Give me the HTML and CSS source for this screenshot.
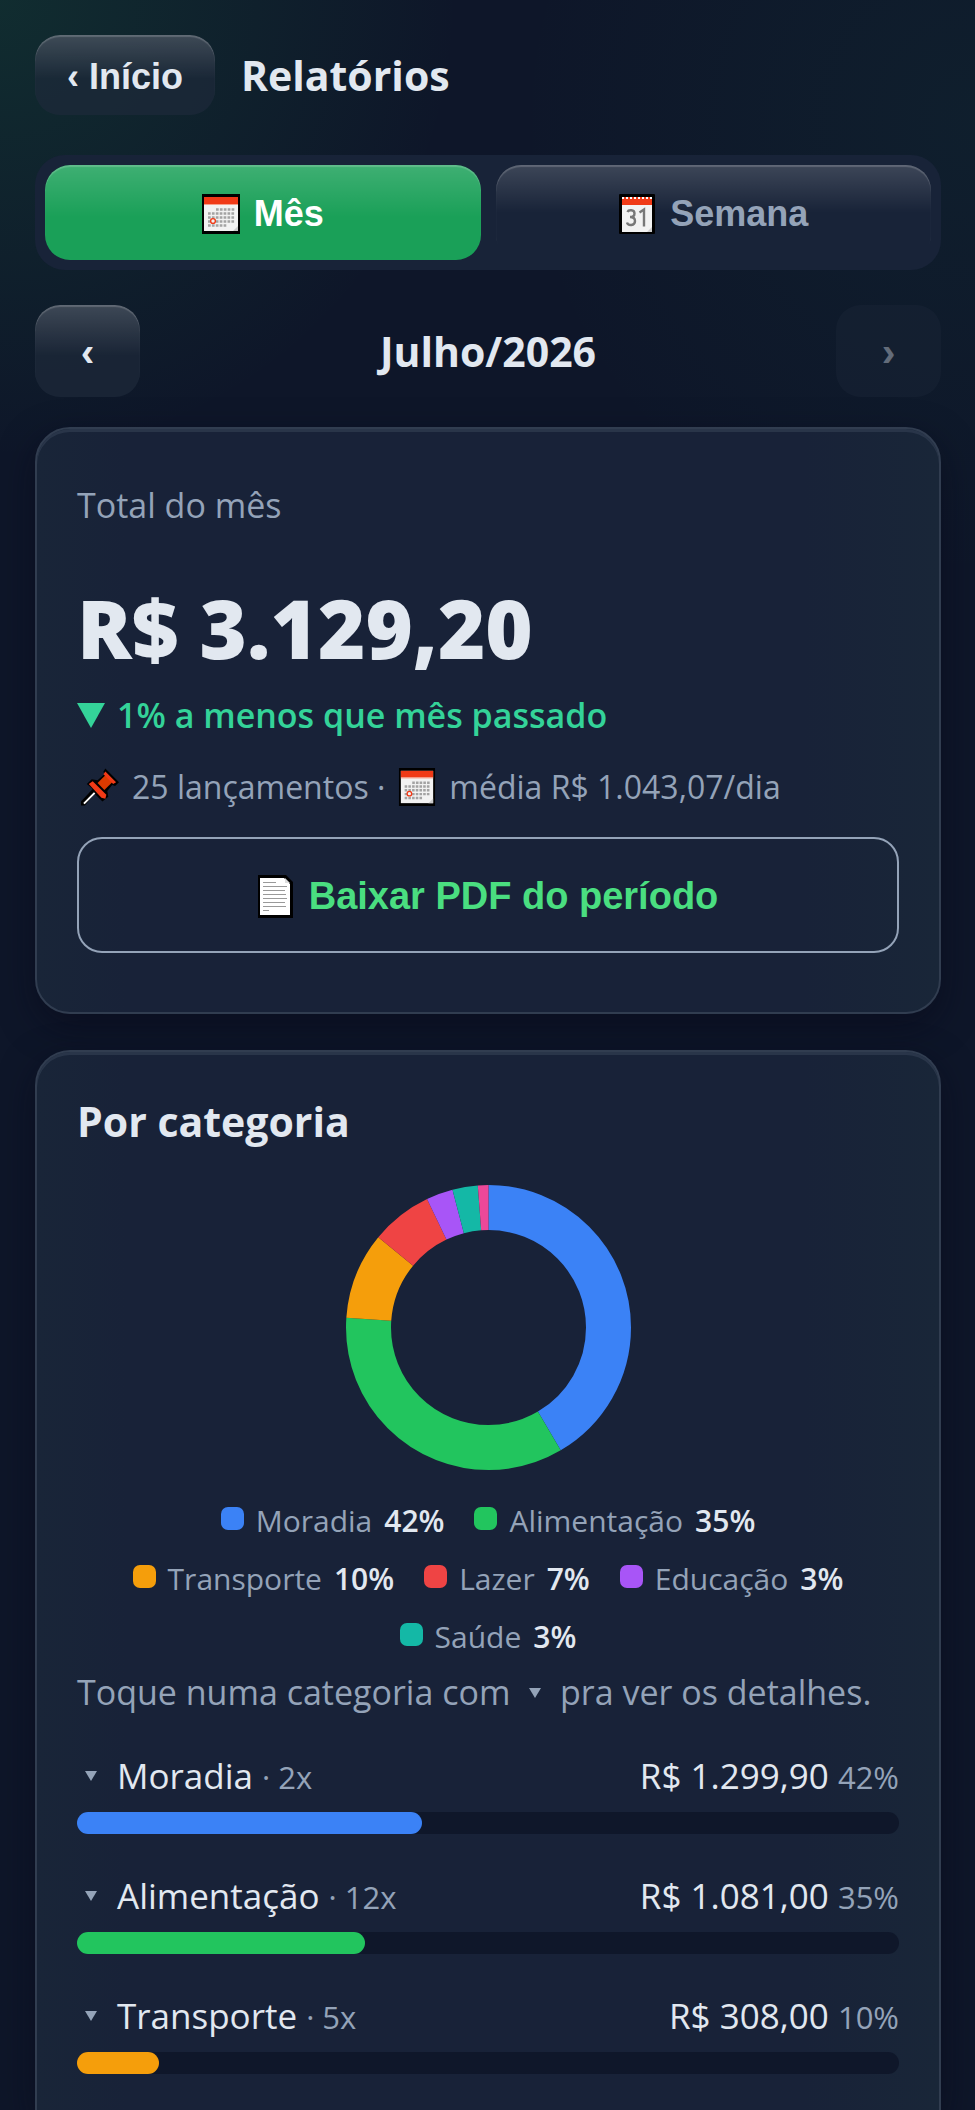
FILE: index.html
```html
<!DOCTYPE html>
<html lang="pt-BR">

<head>
    <meta charset="UTF-8">
    <meta name="viewport" content="width=device-width, initial-scale=1.0">
    <title>Relatórios</title>
    <link rel="stylesheet" href="styles.css">
</head>

<body>
    <!--icons used more than once-->
    <svg class="sprite" aria-hidden="true">
        <symbol id="icon-calendar" viewBox="0 0 38 40">
            <rect width="38" height="40" fill="#000" />
            <rect x="2" y="3" width="34" height="34" fill="#f2f2f2" />
            <rect x="2" y="3" width="34" height="7" fill="#f03a17" />
            <rect x="2" y="10" width="34" height="1" fill="#f7a08c" />
            <path d="M14 15.500h19M6 19.500h27M6 23.500h27M6 27.500h27M6 31.500h19" stroke="#a3a3a3" stroke-width="2.600" stroke-dasharray="2.700 1.200" />
            <circle cx="11" cy="27" r="2.400" fill="#f2f2f2" stroke="#f03a17" stroke-width="1.400" />
            <path d="M31 37l5-5v5z" fill="#ccc" />
        </symbol>
        <symbol id="icon-arrow" viewBox="0 0 12 10">
            <path d="M0 0h12l-6 10z" fill="currentColor" />
        </symbol>
    </svg>

    <header class="top">
        <button class="btn btn-back">‹ Início</button>
        <h1>Relatórios</h1>
    </header>

    <div class="tabs">
        <button class="btn tab active">
            <svg class="icon-tab"><use href="#icon-calendar" /></svg>Mês
        </button>
        <button class="btn tab">
            <svg class="icon-tab" viewBox="0 0 38 40">
                <rect x="1" width="36" height="40" rx="1" fill="#000" />
                <rect x="4" y="3" width="30" height="35" fill="#f2f2f2" />
                <rect x="4" y="3" width="30" height="8" fill="#f03a17" />
                <path d="M4 4h30" stroke="#fff" stroke-width="2" stroke-dasharray="2 2" />
                <path d="M9.500 18c1-2.500 7-2.500 7 1.500 0 3-3 3.500-4.500 3.500 2 0 5 .5 5 4 0 5-7 5-8 1.500M21.500 18.500l4.500-3v17" fill="none" stroke="#777" stroke-width="2.400" />
                <path d="M29 38l5-5v5z" fill="#ccc" />
            </svg>Semana
        </button>
    </div>

    <nav class="period">
        <button class="btn btn-nav" aria-label="Mês anterior">‹</button>
        <h2>Julho/2026</h2>
        <button class="btn btn-nav" aria-label="Próximo mês" disabled>›</button>
    </nav>

    <section class="card summary">
        <p class="label">Total do mês</p>
        <p class="total">R$ 3.129,20</p>
        <p class="trend">
            <svg class="icon-trend" viewBox="0 0 28 25"><path d="M0 0h28l-14 25z" fill="currentColor" /></svg>
            1% a menos que mês passado
        </p>
        <p class="meta">
            <svg class="icon-pin" viewBox="0 0 39 38">
                <path d="M25 0L39 14l-4 4-3-1-5 6 1 6-6 5-8-8L4 38H0v-4l12-13-6-5 5-5 6 1 7-6-1-3z" fill="#000" />
                <path d="M3 36L14 25" stroke="#fff" stroke-width="2" />
                <path d="M17 15l8-8 7 7-8 8z" fill="#dc3a00" />
                <path d="M25 3l11 11-3 2-10-10zM8 16l4-3 14 14-1 4-4-1z" fill="#f03a17" />
            </svg>
            <span>25 lançamentos ·</span>
            <svg class="icon-meta"><use href="#icon-calendar" /></svg>
            <span>média R$ 1.043,07/dia</span>
        </p>
        <button class="btn-pdf">
            <svg class="icon-doc" viewBox="0 0 35 43">
                <path d="M0 0h28l7 7v36H0z" fill="#000" />
                <path d="M2 3h24l6 6v31H2z" fill="#fff" />
                <path d="M27 3v5h5z" fill="#ddd" />
                <path d="M5 7.500h13M5 11.500h24M5 15.500h22M5 19.500h23M5 23.500h24M5 27.500h22M5 31.500h23M5 35.500h6" stroke="#999" />
            </svg>Baixar PDF do período
        </button>
    </section>

    <section class="card categories">
        <h2>Por categoria</h2>
        <svg class="donut" viewBox="0 0 285 285" role="img" aria-label="Gastos por categoria">
            <g fill="none" stroke-width="45" transform="rotate(-90 142.5 142.5)">
                <circle cx="142.5" cy="142.5" r="120" pathLength="1000" stroke="#3b82f6" stroke-dasharray="415.4 1000" />
                <circle cx="142.5" cy="142.5" r="120" pathLength="1000" stroke="#22c55e" stroke-dasharray="345.5 1000" stroke-dashoffset="-415.4" />
                <circle cx="142.5" cy="142.5" r="120" pathLength="1000" stroke="#f59e0b" stroke-dasharray="98.4 1000" stroke-dashoffset="-760.9" />
                <circle cx="142.5" cy="142.5" r="120" pathLength="1000" stroke="#ef4444" stroke-dasharray="69.7 1000" stroke-dashoffset="-859.3" />
                <circle cx="142.5" cy="142.5" r="120" pathLength="1000" stroke="#a855f7" stroke-dasharray="30.3 1000" stroke-dashoffset="-929" />
                <circle cx="142.5" cy="142.5" r="120" pathLength="1000" stroke="#14b8a6" stroke-dasharray="28.7 1000" stroke-dashoffset="-959.3" />
                <circle cx="142.5" cy="142.5" r="120" pathLength="1000" stroke="#ec4899" stroke-dasharray="12 1000" stroke-dashoffset="-988" />
            </g>
        </svg>
        <ul class="legend">
            <li><i class="dot blue"></i>Moradia <b>42%</b></li>
            <li><i class="dot green"></i>Alimentação <b>35%</b></li>
            <li><i class="dot orange"></i>Transporte <b>10%</b></li>
            <li><i class="dot red"></i>Lazer <b>7%</b></li>
            <li><i class="dot purple"></i>Educação <b>3%</b></li>
            <li><i class="dot teal"></i>Saúde <b>3%</b></li>
        </ul>
        <p class="hint">Toque numa categoria com <svg class="arrow"><use href="#icon-arrow" /></svg> pra ver os detalhes.</p>

        <details class="category">
            <summary>
                <span class="row">
                    <svg class="arrow"><use href="#icon-arrow" /></svg>
                    <span class="name">Moradia <small>· 2x</small></span>
                    <span>R$ 1.299,90 <small>42%</small></span>
                </span>
                <span class="bar"><span class="fill blue" style="width: 42%"></span></span>
            </summary>
        </details>
        <details class="category">
            <summary>
                <span class="row">
                    <svg class="arrow"><use href="#icon-arrow" /></svg>
                    <span class="name">Alimentação <small>· 12x</small></span>
                    <span>R$ 1.081,00 <small>35%</small></span>
                </span>
                <span class="bar"><span class="fill green" style="width: 35%"></span></span>
            </summary>
        </details>
        <details class="category">
            <summary>
                <span class="row">
                    <svg class="arrow"><use href="#icon-arrow" /></svg>
                    <span class="name">Transporte <small>· 5x</small></span>
                    <span>R$ 308,00 <small>10%</small></span>
                </span>
                <span class="bar"><span class="fill orange" style="width: 10%"></span></span>
            </summary>
        </details>
    </section>
</body>

</html>
```
FILE: styles.css
```css
* {
    box-sizing: border-box;
    margin: 0;
    padding: 0;
}

body {
    display: flex;
    flex-direction: column;
    min-height: 100vh;
    padding: 35px 34px 0 35px;
    font-family: "Open Sans", "Noto Sans", sans-serif;
    font-size: 34px;
    line-height: 50px;
    color: #e2e8f0;
    background-color: #0e1629;
    background-image:
        radial-gradient(circle at 0 0, rgba(34, 197, 94, 0.13), transparent 460px),
        radial-gradient(circle at 100% 120px, rgba(34, 170, 110, 0.06), transparent 460px);
}

h1,
h2 {
    font-size: 41px;
    font-weight: 700;
    line-height: 56px;
}

button {
    border: none;
    font-family: "Liberation Sans", Arial, sans-serif;
    font-size: 36px;
    font-weight: 700;
    color: #e2e8f0;
    cursor: pointer;
}

.sprite {
    position: absolute;
    width: 0;
    height: 0;
}

.btn {
    padding-top: 3px;
    border-radius: 25px;
    background: linear-gradient(rgba(255, 255, 255, 0.16), transparent 55%) rgba(30, 41, 59, 0.7);
    box-shadow: inset 0 2px 1px rgba(255, 255, 255, 0.18);
}

.top {
    display: flex;
    align-items: center;
    gap: 26px;
    height: 80px;
}

.btn-back {
    height: 80px;
    padding: 3px 32px 0;
}

.tabs {
    display: flex;
    gap: 15px;
    margin-top: 40px;
    padding: 10px;
    border-radius: 30px;
    background: #182338;
}

.tab {
    display: flex;
    flex: 1;
    align-items: center;
    justify-content: center;
    gap: 14px;
    height: 95px;
    color: #94a3b8;
    background: linear-gradient(rgba(255, 255, 255, 0.16), transparent 50%);
}

.tab.active {
    color: white;
    background: linear-gradient(rgba(255, 255, 255, 0.16), transparent 55%) #1aa058;
}

.icon-tab {
    width: 38px;
    height: 40px;
}

.period {
    display: flex;
    align-items: center;
    justify-content: space-between;
    margin: 35px 0 30px;
}

.btn-nav {
    width: 105px;
    height: 92px;
    font-size: 41px;
}

.btn-nav:disabled {
    opacity: 0.4;
    background: rgba(30, 41, 59, 0.9);
    box-shadow: none;
    cursor: default;
}

.card {
    padding: 41px 40px 59px;
    border: 2px solid #313d50;
    border-radius: 35px;
    background: linear-gradient(90deg, #192538, #182238 10%, #182238 85%, #192638);
    box-shadow: 0 12px 35px rgba(8, 8, 24, 0.5), inset 0 3px 0 #293549;
}

.label,
.meta,
.hint {
    color: #94a3b8;
}

.label {
    margin-top: 10px;
}

.total {
    margin-top: 53px;
    font-size: 81px;
    font-weight: 800;
    line-height: 90px;
}

.trend {
    display: flex;
    align-items: center;
    gap: 12px;
    margin-top: 17px;
    font-weight: 600;
    color: #34d399;
}

.icon-trend {
    width: 28px;
    height: 25px;
}

.meta {
    display: flex;
    align-items: center;
    gap: 13px;
    margin-top: 22px;
    padding-left: 4px;
    font-size: 32px;
}

.icon-pin,
.icon-meta {
    width: 38px;
    height: 38px;
}

.btn-pdf {
    display: flex;
    align-items: center;
    justify-content: center;
    gap: 16px;
    width: 100%;
    height: 116px;
    margin-top: 25px;
    padding-top: 3px;
    border: 2px solid #94a3b8;
    border-radius: 25px;
    font-size: 38px;
    color: #4ade80;
    background: transparent;
}

.icon-doc {
    width: 35px;
    height: 43px;
}

.categories {
    flex: 1;
    margin-top: 36px;
    padding-bottom: 0;
    border-bottom: none;
    border-radius: 35px 35px 0 0;
}

.donut {
    display: block;
    width: 285px;
    height: 285px;
    margin: 36px auto 28px;
}

.legend {
    display: flex;
    flex-wrap: wrap;
    justify-content: center;
    gap: 12px 30px;
    padding: 0 40px;
    list-style: none;
    font-size: 30px;
    line-height: 46px;
    color: #94a3b8;
}

.legend li {
    display: flex;
    align-items: center;
    gap: 12px;
}

.legend b {
    font-weight: 600;
    color: #e2e8f0;
}

.dot {
    width: 23px;
    height: 23px;
    margin-bottom: 5px;
    border-radius: 7px;
}

.hint {
    margin: 7px 0 34px;
}

.arrow {
    width: 12px;
    height: 10px;
    color: #94a3b8;
}

.hint .arrow {
    margin: 0 10px 6px;
    vertical-align: middle;
}

.category {
    margin-bottom: 37px;
}

.category summary {
    list-style: none;
    cursor: pointer;
}

.row {
    display: flex;
    align-items: center;
    gap: 20px;
    font-size: 35px;
}

.row .arrow {
    margin-left: 8px;
}

.name {
    flex: 1;
}

small {
    font-size: 31px;
    line-height: 1;
    color: #94a3b8;
}

.bar {
    display: block;
    height: 22px;
    margin-top: 11px;
    border-radius: 11px;
    background: #0f172a;
}

.fill {
    display: block;
    height: 22px;
    border-radius: 11px;
}

.blue {
    background: #3b82f6;
}

.green {
    background: #22c55e;
}

.orange {
    background: #f59e0b;
}

.red {
    background: #ef4444;
}

.purple {
    background: #a855f7;
}

.teal {
    background: #14b8a6;
}
```
